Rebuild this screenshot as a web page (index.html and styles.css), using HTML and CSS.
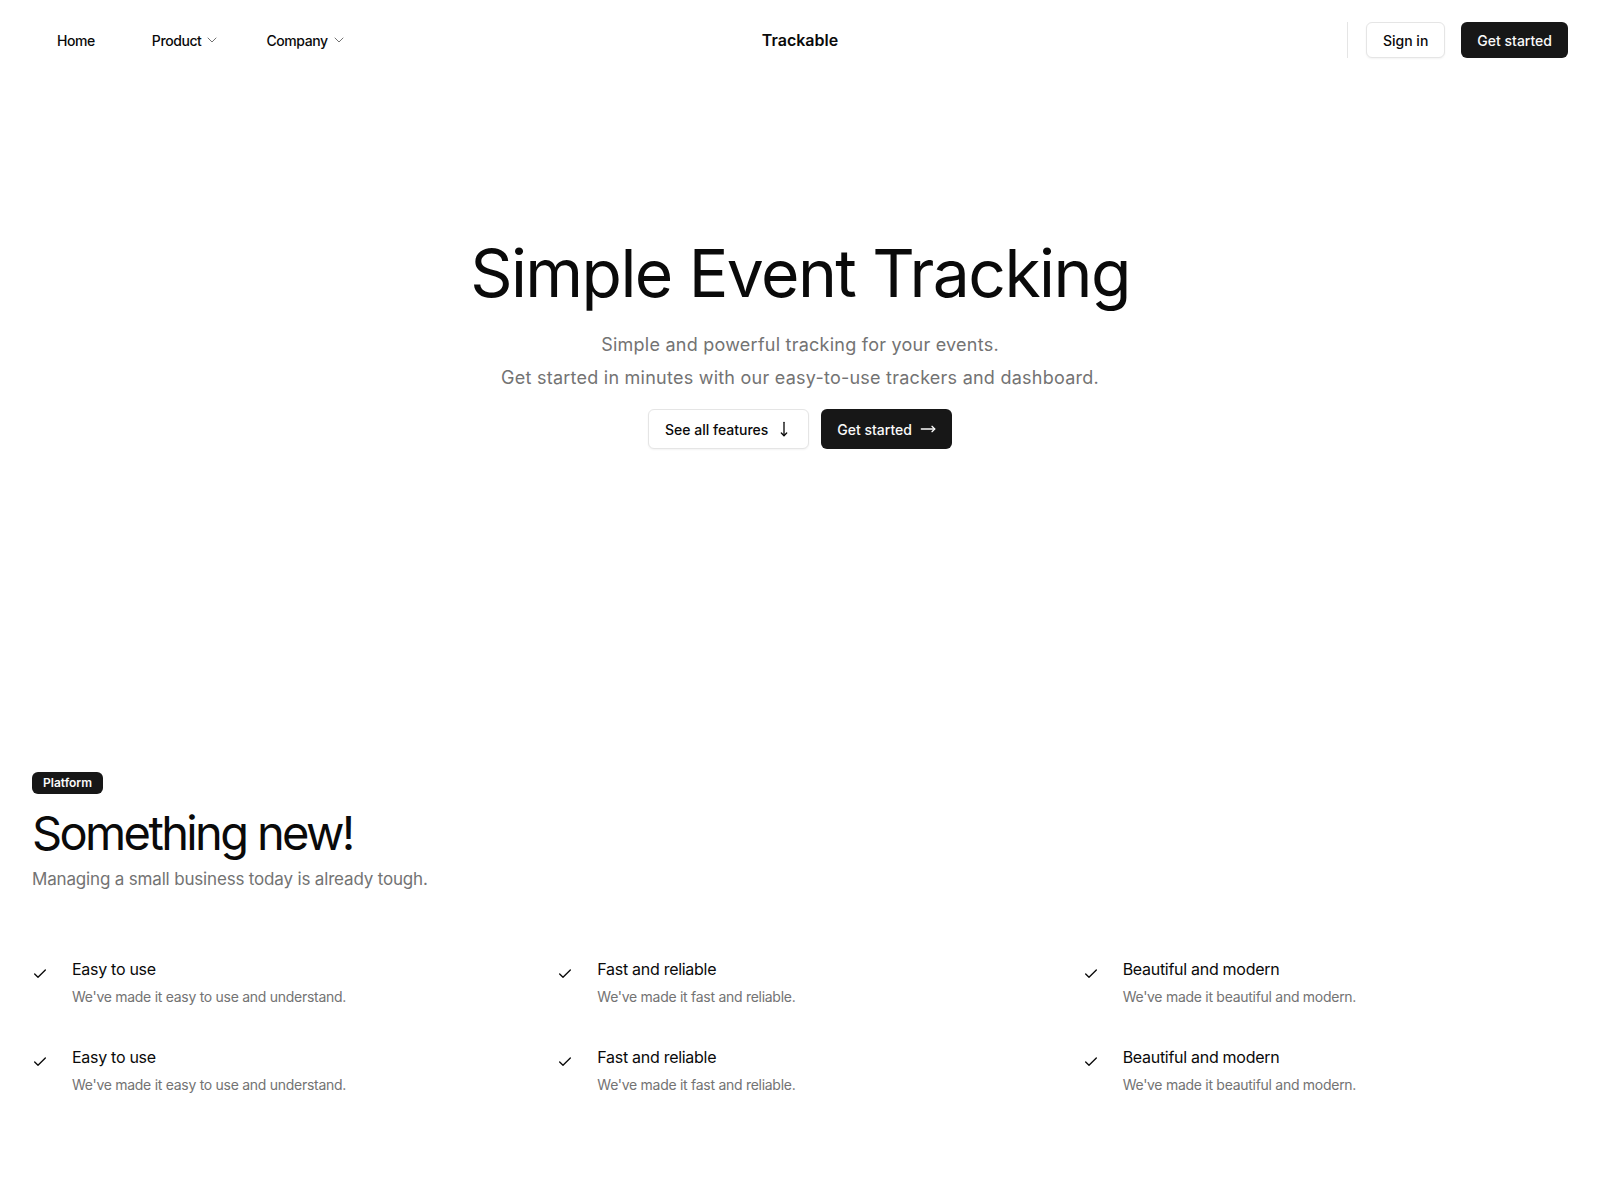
FILE: index.html
```html
<!DOCTYPE html>
<html lang="en">
<head>
<meta charset="utf-8">
<title>Trackable</title>
<link rel="stylesheet" href="styles.css">
</head>
<body>
<header class="header">
  <nav class="nav-left">
    <a class="nav-link nav-home" href="#">Home</a>
    <a class="nav-link nav-product" href="#">Product
      <svg class="chev" viewBox="0 0 24 24" width="16" height="16" fill="none" stroke="currentColor" stroke-width="1.5" stroke-linecap="round" stroke-linejoin="round"><path d="m6 9 6 6 6-6"/></svg>
    </a>
    <a class="nav-link nav-company" href="#">Company
      <svg class="chev" viewBox="0 0 24 24" width="16" height="16" fill="none" stroke="currentColor" stroke-width="1.5" stroke-linecap="round" stroke-linejoin="round"><path d="m6 9 6 6 6-6"/></svg>
    </a>
  </nav>
  <div class="logo">Trackable</div>
  <div class="nav-right">
    <span class="sep"></span>
    <a class="btn btn-outline btn-sm" href="#">Sign in</a>
    <a class="btn btn-dark btn-sm" href="#">Get started</a>
  </div>
</header>

<main>
  <section class="hero">
    <h1 class="hero-title">Simple Event Tracking</h1>
    <p class="hero-sub">Simple and powerful tracking for your events.<br>Get started in minutes with our easy-to-use trackers and dashboard.</p>
    <div class="hero-actions">
      <a class="btn btn-outline btn-lg" href="#">See all features
        <svg viewBox="0 0 24 24" width="16" height="16" fill="none" stroke="currentColor" stroke-width="2" stroke-linecap="round" stroke-linejoin="round"><path d="M8 18l4 4 4-4"/><path d="M12 2v20"/></svg>
      </a>
      <a class="btn btn-dark btn-lg" href="#">Get started
        <svg viewBox="0 0 24 24" width="16" height="16" fill="none" stroke="currentColor" stroke-width="2" stroke-linecap="round" stroke-linejoin="round"><path d="M18 8l4 4-4 4"/><path d="M2 12h20"/></svg>
      </a>
    </div>
  </section>

  <section class="features">
    <span class="badge">Platform</span>
    <h2 class="features-title">Something new!</h2>
    <p class="features-sub">Managing a small business today is already tough.</p>
    <div class="grid">
      <div class="item">
        <svg class="check" viewBox="0 0 24 24" width="16" height="16" fill="none" stroke="currentColor" stroke-width="2" stroke-linecap="round" stroke-linejoin="round"><path d="M20 6 9 17l-5-5"/></svg>
        <div><p class="item-title">Easy to use</p><p class="item-desc">We've made it easy to use and understand.</p></div>
      </div>
      <div class="item">
        <svg class="check" viewBox="0 0 24 24" width="16" height="16" fill="none" stroke="currentColor" stroke-width="2" stroke-linecap="round" stroke-linejoin="round"><path d="M20 6 9 17l-5-5"/></svg>
        <div><p class="item-title">Fast and reliable</p><p class="item-desc">We've made it fast and reliable.</p></div>
      </div>
      <div class="item">
        <svg class="check" viewBox="0 0 24 24" width="16" height="16" fill="none" stroke="currentColor" stroke-width="2" stroke-linecap="round" stroke-linejoin="round"><path d="M20 6 9 17l-5-5"/></svg>
        <div><p class="item-title">Beautiful and modern</p><p class="item-desc">We've made it beautiful and modern.</p></div>
      </div>
      <div class="item">
        <svg class="check" viewBox="0 0 24 24" width="16" height="16" fill="none" stroke="currentColor" stroke-width="2" stroke-linecap="round" stroke-linejoin="round"><path d="M20 6 9 17l-5-5"/></svg>
        <div><p class="item-title">Easy to use</p><p class="item-desc">We've made it easy to use and understand.</p></div>
      </div>
      <div class="item">
        <svg class="check" viewBox="0 0 24 24" width="16" height="16" fill="none" stroke="currentColor" stroke-width="2" stroke-linecap="round" stroke-linejoin="round"><path d="M20 6 9 17l-5-5"/></svg>
        <div><p class="item-title">Fast and reliable</p><p class="item-desc">We've made it fast and reliable.</p></div>
      </div>
      <div class="item">
        <svg class="check" viewBox="0 0 24 24" width="16" height="16" fill="none" stroke="currentColor" stroke-width="2" stroke-linecap="round" stroke-linejoin="round"><path d="M20 6 9 17l-5-5"/></svg>
        <div><p class="item-title">Beautiful and modern</p><p class="item-desc">We've made it beautiful and modern.</p></div>
      </div>
    </div>
  </section>
</main>
</body>
</html>
```

FILE: styles.css
```css
* { box-sizing: border-box; }
html, body { margin: 0; padding: 0; }
body {
  font-family: Inter, "Noto Sans", sans-serif;
  color: #0a0a0a;
  background: #fff;
  -webkit-font-smoothing: antialiased;
}
a { color: inherit; text-decoration: none; }
p, h1, h2 { margin: 0; }

.header {
  height: 80px;
  padding: 0 32px;
  display: grid;
  grid-template-columns: 1fr auto 1fr;
  align-items: center;
}
.nav-left { display: flex; align-items: center; }
.nav-link {
  display: inline-flex;
  align-items: center;
  font-size: 14px;
  font-weight: 500;
  letter-spacing: -0.03em;
  height: 36px;
}
.nav-home { margin-left: 25px; }
.nav-product { margin-left: 57px; }
.nav-company { margin-left: 46px; }
.chev { color: #737373; margin-left: 3px; }
.logo { font-size: 16px; font-weight: 600; }
.nav-right { display: flex; align-items: center; justify-content: flex-end; gap: 16px; }
.sep { width: 1px; height: 36px; background: #e5e5e5; margin-right: 2px; }

.btn {
  display: inline-flex;
  align-items: center;
  justify-content: center;
  gap: 8px;
  font-size: 14px;
  font-weight: 500;
  border-radius: 6px;
  white-space: nowrap;
}
.btn-sm { height: 36px; padding: 0 16px; }
.btn-lg { height: 40px; padding: 0 16px; }
.btn-outline { border: 1px solid #e5e5e5; background: #fff; box-shadow: 0 1px 2px rgba(0,0,0,0.05); }
.btn-dark { background: #171717; color: #fafafa; }

.hero {
  padding: 160px 32px 0;
  display: flex;
  flex-direction: column;
  align-items: center;
  text-align: center;
}
.hero-title {
  font-size: 66px;
  font-weight: 400;
  line-height: 66px;
  letter-spacing: -0.024em;
}
.hero-sub {
  margin-top: 22px;
  font-size: 18px;
  line-height: 33px;
  color: #737373;
  letter-spacing: 0.24px;
}
.hero-actions { margin-top: 15px; display: flex; gap: 12px; }

.features { padding: 322px 32px 80px; }
.badge {
  display: inline-flex;
  align-items: center;
  height: 22px;
  padding: 0 11px;
  border-radius: 6px;
  background: #171717;
  color: #fafafa;
  font-size: 12px;
  font-weight: 600;
}
.features-title {
  margin-top: 11px;
  font-size: 47px;
  font-weight: 400;
  line-height: 56px;
  letter-spacing: -0.056em;
}
.features-sub {
  margin-top: 4px;
  font-size: 17px;
  line-height: 28px;
  color: #737373;
  letter-spacing: -0.01em;
}
.grid {
  margin-top: 64px;
  display: grid;
  grid-template-columns: repeat(3, 1fr);
  column-gap: 40px;
  row-gap: 38px;
}
.item { display: flex; gap: 24px; align-items: flex-start; }
.check { flex: none; margin-top: 9px; }
.item-title { font-size: 16px; line-height: 24px; letter-spacing: -0.018em; }
.item-desc { margin-top: 6px; font-size: 14px; line-height: 20px; color: #737373; letter-spacing: -0.02em; }
```
